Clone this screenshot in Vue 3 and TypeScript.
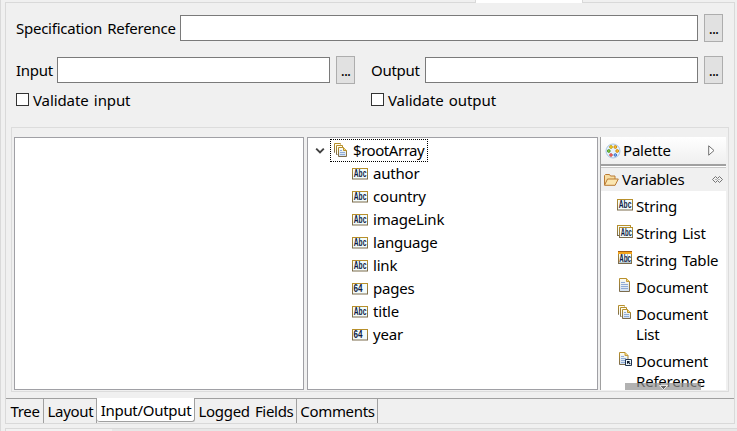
<script setup lang="ts">
import { ref } from 'vue'

type IconKind = 'abc' | 'num' | 'abcList' | 'abcTable' | 'doc' | 'docList' | 'docRef'
interface Entry { label: string; icon: IconKind }
interface Tab { label: string; width: number }

const specification = ref('')
const input = ref('')
const output = ref('')
const validateInput = ref(false)
const validateOutput = ref(false)

const fields: Entry[] = [
  { label: 'author', icon: 'abc' },
  { label: 'country', icon: 'abc' },
  { label: 'imageLink', icon: 'abc' },
  { label: 'language', icon: 'abc' },
  { label: 'link', icon: 'abc' },
  { label: 'pages', icon: 'num' },
  { label: 'title', icon: 'abc' },
  { label: 'year', icon: 'num' },
]

const variables: Entry[] = [
  { label: 'String', icon: 'abc' },
  { label: 'String List', icon: 'abcList' },
  { label: 'String Table', icon: 'abcTable' },
  { label: 'Document', icon: 'doc' },
  { label: 'Document List', icon: 'docList' },
  { label: 'Document Reference', icon: 'docRef' },
]

const tabs: Tab[] = [
  { label: 'Tree', width: 38 },
  { label: 'Layout', width: 53 },
  { label: 'Input/Output', width: 98 },
  { label: 'Logged Fields', width: 102 },
  { label: 'Comments', width: 81 },
]
const active = ref('Input/Output')
</script>

<template>
  <div class="editor">
    <svg class="defs" width="0" height="0">
      <defs>
        <linearGradient id="gold" x1="0" y1="0" x2="0" y2="1">
          <stop offset="0" stop-color="#b8902c" /><stop offset="1" stop-color="#7b6b4c" />
        </linearGradient>
        <linearGradient id="paper" x1="0" y1="0" x2="0" y2="1">
          <stop offset="0" stop-color="#fffdf0" /><stop offset="1" stop-color="#cfdff2" />
        </linearGradient>
        <symbol id="abc" viewBox="0 0 16 16">
          <rect x=".5" y="2.5" width="15" height="10.500" fill="#f3fbfb" stroke="url(#gold)" />
          <text x="1.800" y="11.200" textLength="12.600" lengthAdjust="spacingAndGlyphs" class="glyph">Abc</text>
        </symbol>
        <symbol id="num" viewBox="0 0 16 16">
          <rect x=".5" y="2.5" width="15" height="10.500" fill="#f3fbfb" stroke="url(#gold)" />
          <text x="1.600" y="11.200" textLength="9" lengthAdjust="spacingAndGlyphs" class="glyph">64</text>
        </symbol>
        <symbol id="abcList" viewBox="0 0 16 16">
          <rect x=".5" y="1.5" width="13" height="10" fill="#f3fbfb" stroke="url(#gold)" />
          <rect x="2.5" y="3.5" width="13" height="10" fill="#f3fbfb" stroke="url(#gold)" />
          <text x="3.700" y="12" textLength="11" lengthAdjust="spacingAndGlyphs" class="glyph">Abc</text>
        </symbol>
        <symbol id="abcTable" viewBox="0 0 16 16">
          <rect x="1.5" y="1.5" width="13" height="12" fill="#f3fbfb" stroke="url(#gold)" />
          <path d="M1 1h14v1H1z" fill="#a85e10" /><path d="M1 2h14v2H1z" fill="#f4a51d" />
          <path d="M5.5 4v9M10.5 4v9M2 12.5h12" stroke="#b8c8d0" />
          <text x="2.300" y="12" textLength="11.600" lengthAdjust="spacingAndGlyphs" class="glyph">Abc</text>
        </symbol>
        <symbol id="doc" viewBox="0 0 16 16">
          <path d="M2.5 1.5h7l3 3v10h-10z" fill="url(#paper)" stroke="url(#gold)" />
          <path d="M9.5 1.5v3h3" fill="#f3d878" stroke="#c79b39" />
          <path d="M4 5.5h4M4 7.5h7M4 9.5h7M4 11.5h7" stroke="#8fabd6" />
        </symbol>
        <symbol id="docList" viewBox="0 0 16 16">
          <path d="M2 10.500h-.5v-9h6v1" fill="none" stroke="url(#gold)" />
          <path d="M2 2h5v1H3v7H2z" fill="#fffdf0" />
          <path d="M4.500 12.500h-1v-9h6v1.500" fill="#fffdf0" stroke="url(#gold)" />
          <path d="M5.5 5.5h5l3 3v6h-8z" fill="url(#paper)" stroke="url(#gold)" />
          <path d="M10.500 5.500v3h3" fill="#f3d878" stroke="#b8902c" />
          <path d="M7 8.5h2M7 10.5h5M7 12.5h5" stroke="#8fabd6" />
        </symbol>
        <symbol id="docRef" viewBox="0 0 16 16">
          <path d="M2.5 .5h5.500l3 3v9h-8.500z" fill="url(#paper)" stroke="url(#gold)" />
          <path d="M8 .5v3h3" fill="#f3d878" stroke="#c79b39" />
          <path d="M4 4.5h3M4 6.5h5M4 8.5h4M4 10.5h4" stroke="#8fabd6" />
          <path d="M8.5 7.5h6v6h-6z" fill="#eefaff" stroke="#213450" />
          <path d="M10 9h3.200l-1.100 1.100 1.600 1.600-.8.8-1.600-1.600L10 12.200z" fill="#101c30" />
        </symbol>
      </defs>
    </svg>

    <div class="strip"><div class="strip-left"></div><div class="strip-open"></div><div class="strip-right"></div></div>

    <main class="page">
      <div class="row spec">
        <label for="spec">Specification Reference</label>
        <input id="spec" v-model="specification" class="field" type="text" />
        <button class="browse" type="button">...</button>
      </div>

      <div class="columns">
        <section class="column">
          <div class="row">
            <label for="in">Input</label>
            <input id="in" v-model="input" class="field" type="text" />
            <button class="browse" type="button">...</button>
          </div>
          <label class="check"><input v-model="validateInput" type="checkbox" /><span>Validate input</span></label>
        </section>
        <section class="column">
          <div class="row">
            <label for="out">Output</label>
            <input id="out" v-model="output" class="field" type="text" />
            <button class="browse" type="button">...</button>
          </div>
          <label class="check"><input v-model="validateOutput" type="checkbox" /><span>Validate output</span></label>
        </section>
      </div>

      <div class="group">
        <div class="pane source"></div>
        <div class="pane tree">
          <div class="root">
            <svg class="chevron" viewBox="0 0 10 8"><path d="M1.2 1.7L5 5.5l3.8-3.8" fill="none" stroke="#404040" stroke-width="1.9" /></svg>
            <div class="focus"><svg class="icon"><use href="#docList" /></svg><span>$rootArray</span></div>
          </div>
          <div v-for="f in fields" :key="f.label" class="leaf">
            <svg class="icon"><use :href="'#' + f.icon" /></svg><span>{{ f.label }}</span>
          </div>
        </div>

        <aside class="palette">
          <header class="palette-head">
            <svg class="icon" viewBox="0 0 16 16">
              <circle cx="8" cy="8" r="7" fill="#e5f2fc" stroke="#a9c6e4" />
              <g stroke-width=".8">
                <circle cx="6" cy="4" r="1.4" fill="#ffe02e" stroke="#b58b00" />
                <circle cx="10.3" cy="4" r="1.4" fill="#ffc52e" stroke="#c77b00" />
                <circle cx="3.8" cy="8" r="1.4" fill="#8bd13f" stroke="#43851b" />
                <circle cx="12.2" cy="8" r="1.4" fill="#ffc52e" stroke="#c77b00" />
                <circle cx="6" cy="12" r="1.3" fill="#ff9a8b" stroke="#c32020" />
                <circle cx="10.3" cy="12" r="1.3" fill="#8abaff" stroke="#2254ad" />
              </g>
            </svg>
            <span>Palette</span>
            <svg class="expand" viewBox="0 0 7 11"><path d="M.7.8v9.4L6 5.5z" fill="#fff" stroke="#707070" /></svg>
          </header>
          <div class="drawer">
            <svg class="icon" viewBox="0 0 16 16">
              <path d="M1.5 13V3.5l1-1h4l1 1.5h4.500v3" fill="#f7dda2" stroke="#b97a34" />
              <path d="M1.5 13.3L4.5 7h10.800l-3.200 6.300z" fill="#fbe6b0" stroke="#b97a34" />
            </svg>
            <span>Variables</span>
            <svg class="pin" viewBox="0 0 11 7"><path d="M3.5.5l-3 3 3 3 2-2 2 2 3-3-3-3-2 2zM3.500 3.500h1M6.500 3.500h1" fill="none" stroke="#666" stroke-width=".9" /></svg>
          </div>
          <ul class="items">
            <li v-for="v in variables" :key="v.label">
              <svg class="icon" :class="v.icon"><use :href="'#' + v.icon" /></svg><span>{{ v.label }}</span>
            </li>
          </ul>
          <div class="scroll"><svg viewBox="0 0 9 5"><path d="M.5.5h8L4.500 4.500z" fill="#666" stroke="#fff" stroke-width=".8" /></svg></div>
        </aside>
      </div>

      <nav class="tabs">
        <button v-for="t in tabs" :key="t.label" type="button" class="tab" :class="{ active: t.label === active }"
          :style="{ width: t.width + 'px' }" @click="active = t.label">{{ t.label }}</button>
      </nav>
    </main>
    <footer class="below"><div></div></footer>
  </div>
</template>

<style>
body { margin: 0; overflow: hidden; background: #f0f0f0; }
</style>

<style scoped>
* { box-sizing: border-box; }
.editor { width: 737px; height: 431px; padding-left: 4px; overflow: hidden; background: #f0f0f0; border-left: 1px solid #d9d9d9; color: #000; font: 15px/20px "Noto Sans", "Open Sans", sans-serif; letter-spacing: -.2px; word-spacing: 1.5px; }
.defs { display: block; height: 0; }
.glyph { font: bold 10px "Liberation Sans", sans-serif; fill: #0d1b45; letter-spacing: 0; }
.strip { display: flex; height: 3px; width: 730px; }
.strip-left { width: 471px; border-right: 1px solid #d9d9d9; border-bottom: 1px solid #d9d9d9; }
.strip-open { width: 106px; background: #fff; }
.strip-right { flex: 1; border-left: 1px solid #d9d9d9; border-bottom: 1px solid #d9d9d9; }
.page { width: 730px; height: 421px; border: 1px solid #d9d9d9; border-top: 0; padding: 11px 5px 0; }
.row { display: flex; align-items: center; height: 28px; }
.spec { padding: 0 6px 0 5px; }
.row label { white-space: nowrap; letter-spacing: -.3px; }
.spec label { width: 164px; letter-spacing: -.25px; }
.field { flex: 1; min-width: 0; height: 26px; margin: 0 6px 0 0; padding: 0 4px; border: 1px solid #7a7a7a; background: #fff; border-radius: 0; outline: 0; font: inherit; }
.browse { width: 19px; height: 28px; padding: 0; border: 1px solid #adadad; background: #e1e1e1; font: inherit; letter-spacing: -.8px; color: #000; }
.columns { display: grid; grid-template-columns: 339px 352px; gap: 16px; margin: 14px 0 0 5px; }
.column:first-child .row label { width: 41px; }
.column:last-child .row label { width: 54px; }
.check { display: flex; align-items: center; gap: 4px; height: 20px; margin-top: 6px; letter-spacing: -.1px; }
.check input { appearance: none; width: 13px; height: 13px; margin: -1px 0 0; border: 1px solid #333; background: #fff; }
.group { display: flex; width: 718px; height: 265px; margin-top: 17px; padding: 9px 2px 1px; border: 1px solid #dcdcdc; }
.pane { height: 253px; background: #fff; border: 1px solid #a0a0a5; }
.source { width: 290px; margin-right: 3px; }
.tree { width: 291px; margin-right: 2px; padding-top: 1px; }
.icon { width: 16px; height: 16px; flex: none; }
.root { display: flex; align-items: center; height: 23px; padding-left: 7px; }
.chevron { width: 10px; height: 8px; margin-right: 5px; }
.focus { display: flex; align-items: center; gap: 4px; width: 98px; height: 23px; padding: 0 0 1px 2px; border: 1px dotted #000; letter-spacing: -.45px; }
.leaf { display: flex; align-items: center; gap: 5px; height: 23px; padding: 1px 0 0 44px; }
.leaf span { margin-top: -3px; }
.palette { position: relative; width: 126px; height: 253px; overflow: hidden; border-left: 1px solid #a0a0a0; background: #fff; }
.palette-head { display: flex; align-items: center; height: 29px; padding: 0 11px 0 4px; gap: 2px; background: linear-gradient(#fff, #efefef); border-bottom: 2px solid #a0a0a0; }
.palette-head span { margin-top: -1px; }
.expand { width: 7px; height: 11px; margin-left: auto; }
.drawer { display: flex; align-items: center; gap: 3px; height: 24px; margin-top: 1px; padding: 0 3px 0 2px; border-top: 1px solid #c8c8c8; background: #f0f0f0; }
.drawer span { margin-top: -1px; }
.pin { width: 11px; height: 7px; margin-left: auto; }
.items { margin: 0; padding: 2px 0 0 16px; list-style: none; }
.items li { display: flex; gap: 3px; padding: 3px 0 4px; }
.items li span { width: 84px; }
.abc, .abcList, .docRef { margin-top: 1px; }
.scroll { position: absolute; left: 24px; bottom: 0; display: flex; justify-content: center; width: 76px; height: 7px; background: rgba(145, 145, 145, .7); }
.scroll svg { width: 9px; height: 5px; margin-top: 2px; }
.tabs { display: flex; height: 25px; margin: 6px -5px 0; border-top: 1px solid #a0a0a0; }
.tab { height: 24px; padding: 0 0 0 1px; border: 0; border-right: 1px solid #a0a0a0; background: transparent; color: #000; font: inherit; letter-spacing: -.3px; word-spacing: inherit; white-space: nowrap; }
.tab.active { height: 24px; margin-top: -1px; padding-top: 1px; background: #fff; border-bottom: 1px solid #a0a0a0; border-radius: 0 0 3px 3px; }
.below { height: 8px; margin-top: 4px; width: 732px; border-top: 1px solid #d9d9d9; background: #e7e7e7; }
.below div { width: 107px; height: 6px; background: #f2f2f2; border-left: 1px solid #d9d9d9; }
</style>
